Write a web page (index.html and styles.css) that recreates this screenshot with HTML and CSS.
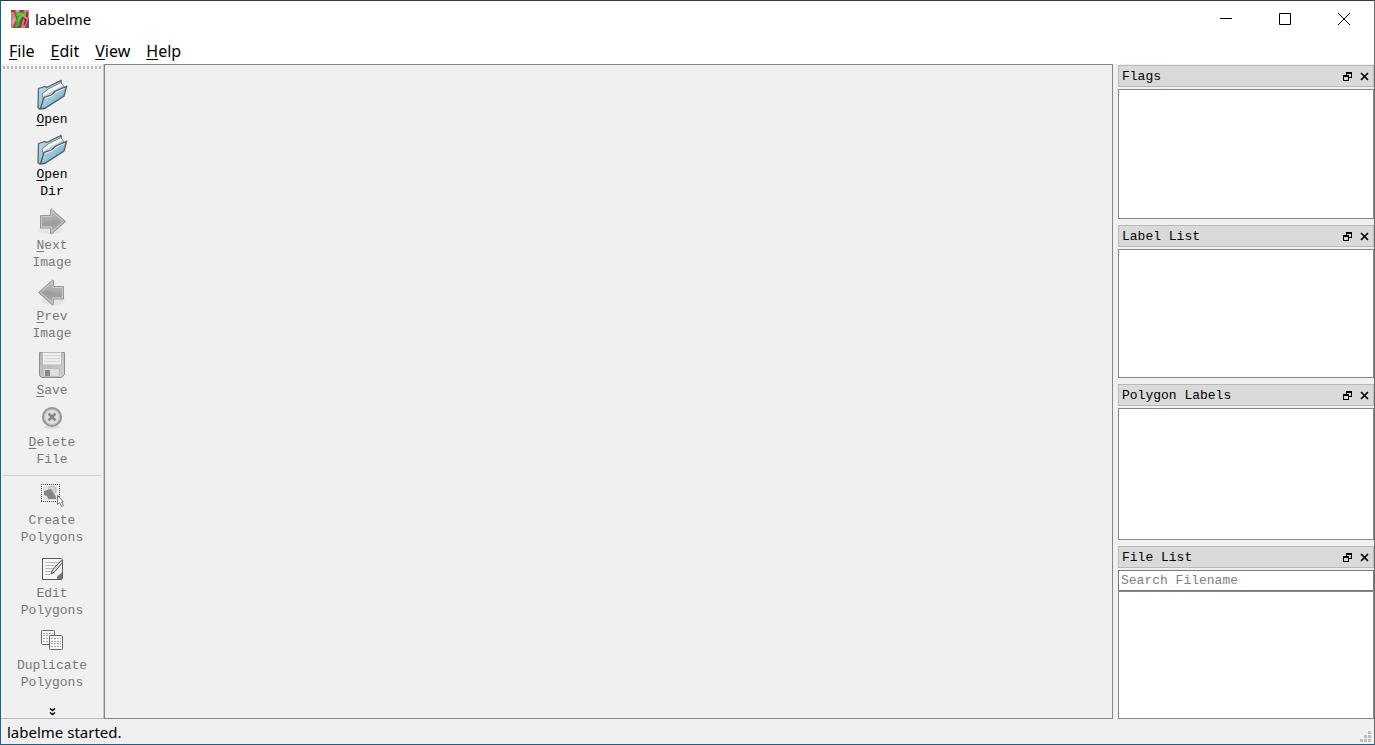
FILE: index.html
```html
<!DOCTYPE html>
<html lang="en">
<head>
    <meta charset="UTF-8">
    <meta name="viewport" content="width=device-width, initial-scale=1.0">
    <title>labelme</title>
    <link rel="stylesheet" href="styles.css">
</head>
<body>
    <!-- Shared shapes and gradients -->
    <svg class="defs" width="0" height="0" aria-hidden="true">
        <defs>
            <linearGradient id="folderBlue" x1="0" y1="0" x2="1" y2="1">
                <stop offset="0" stop-color="#c9e2ee"/>
                <stop offset=".5" stop-color="#9ac5dc"/>
                <stop offset="1" stop-color="#5f97b8"/>
            </linearGradient>
            <linearGradient id="arrowGray" x1="0" y1="0" x2="0" y2="1">
                <stop offset="0" stop-color="#c2c2c2"/>
                <stop offset=".55" stop-color="#a2a2a2"/>
                <stop offset="1" stop-color="#bcbcbc"/>
            </linearGradient>
            <linearGradient id="diskGray" x1="0" y1="0" x2="1" y2="1">
                <stop offset="0" stop-color="#b2b2b2"/>
                <stop offset="1" stop-color="#d2d2d2"/>
            </linearGradient>
            <symbol id="folder" viewBox="0 0 32 32">
                <path d="M2.5 9.5 9 7.5l1.500 1L25 1.500l1 8L8 29.500l-4.500.500-1.500-1.500z" fill="url(#folderBlue)" stroke="#5a676e" stroke-width="1.300"/>
                <path d="M6 15 12 10 25 3.500 28 8 25 13 8 25z" fill="#f4f4f4" stroke="#7c8386"/>
                <path d="M7 19 13 15 27 7.500" fill="none" stroke="#bfc5c8" stroke-width="2"/>
                <path d="M4.500 29.500 8 18.500 15.500 16 19 12.500 30.500 7.500 28 17 8.500 29.500z" fill="url(#folderBlue)" stroke="#4f5d64" stroke-width="1.300"/>
                <path d="M9 19.500 16 17l4-3.500 8.500-4" fill="none" stroke="#dff1fa"/>
            </symbol>
            <symbol id="arrow" viewBox="0 0 32 31">
                <ellipse cx="15" cy="24" rx="12" ry="4" fill="#e4e4e4"/>
                <path d="M4.500 9.500h10v-6l1-.500L29.500 15.500 15.500 28l-1-.500v-5.500h-10z" fill="url(#arrowGray)" stroke="#979797"/>
                <path d="M5.500 10.500h10V5l12 10.500L15.500 26v-5h-10z" fill="none" stroke="#cacaca"/>
                <path d="M6 17q8 1 10-2t9 0L16 24v-4H6z" fill="#8f8f8f" opacity=".3"/>
            </symbol>
            <symbol id="restore" viewBox="0 0 9 9">
                <path d="M3 0h6v6H6V5h2V2H4v1H3z"/>
                <path fill-rule="evenodd" d="M0 3h6v6H0zM1 5h4v3H1z"/>
            </symbol>
            <symbol id="cross" viewBox="0 0 9 9">
                <path d="m1 1 7 7M8 1 1 8" fill="none" stroke="#000" stroke-width="1.700"/>
            </symbol>
        </defs>
    </svg>

    <div class="window">
        <header class="titlebar">
            <svg class="app-icon" viewBox="0 0 18 18" aria-hidden="true">
                <rect width="18" height="18" fill="#8d4148"/>
                <path d="M0 2h3l2 6-3 10H0zM13 0h5v7l-4 11h-4l2-9z" fill="#c9827d"/>
                <path d="M5 0h4L7 3 4 2zM1 10l3-3 1 3-3 5z" fill="#e0a59a"/>
                <path d="m12 8 3 2-2 5M16 2v5" fill="none" stroke="#6e2932" stroke-width="1.500"/>
                <path d="M4 4 8 2h5l2 3-4 2-2 4-1 5-4 2 1-7 1-4z" fill="#4aa82d"/>
                <path d="m6 5 3-1 4 1-4 2-2 4" fill="none" stroke="#69d447" stroke-width="1.500"/>
            </svg>
            <h1>labelme</h1>
            <div class="window-controls">
                <button type="button" aria-label="Minimize">
                    <svg width="12" height="12"><path d="M0 5.500h12" stroke="#000"/></svg>
                </button>
                <button type="button" aria-label="Maximize">
                    <svg width="12" height="12"><path d="M.500.500h11v11H.500z" fill="none" stroke="#000"/></svg>
                </button>
                <button type="button" aria-label="Close">
                    <svg width="12" height="12"><path d="m0 0 12 12M12 0 0 12" stroke="#000"/></svg>
                </button>
            </div>
        </header>

        <nav class="menubar">
            <button type="button"><u>F</u>ile</button>
            <button type="button"><u>E</u>dit</button>
            <button type="button"><u>V</u>iew</button>
            <button type="button"><u>H</u>elp</button>
        </nav>

        <main class="workspace">
            <!-- Tools -->
            <aside class="toolbar">
                <div class="handle"></div>
                <button type="button" class="tool">
                    <svg class="icon"><use href="#folder"/></svg>
                    <span><u>O</u>pen</span>
                </button>
                <button type="button" class="tool">
                    <svg class="icon"><use href="#folder"/></svg>
                    <span><u>O</u>pen<br>Dir</span>
                </button>
                <button type="button" class="tool" disabled>
                    <svg class="icon icon-arrow"><use href="#arrow"/></svg>
                    <span><u>N</u>ext<br>Image</span>
                </button>
                <button type="button" class="tool" disabled>
                    <svg class="icon icon-arrow icon-flip"><use href="#arrow"/></svg>
                    <span><u>P</u>rev<br>Image</span>
                </button>
                <button type="button" class="tool" disabled>
                    <svg class="icon icon-save" viewBox="0 0 32 34">
                        <path d="M3.500 4.500h25v22l-3 3h-20l-2-2z" fill="url(#diskGray)" stroke="#8e8e8e"/>
                        <path d="M6.500 4.500h19V17h-19z" fill="#eee" stroke="#bbb"/>
                        <path d="M8 7.500h16M8 10.500h16M8 13.500h16" stroke="#d6d6d6"/>
                        <path d="M7.500 20.500h16v8h-16z" fill="#dedede" stroke="#bcbcbc"/>
                        <path d="M9 22h5v6H9z" fill="#898989"/>
                    </svg>
                    <span><u>S</u>ave</span>
                </button>
                <button type="button" class="tool" disabled>
                    <svg class="icon icon-delete" viewBox="0 0 32 29">
                        <ellipse cx="16" cy="22" rx="8" ry="2" fill="#dcdcdc"/>
                        <circle cx="16" cy="12" r="9" fill="#e0e0e0" stroke="#929292" stroke-width="2"/>
                        <circle cx="16" cy="12" r="7.500" fill="none" stroke="#bababa"/>
                        <path d="m12.500 8.500 7 7m0-7-7 7" stroke="#868686" stroke-width="2.500"/>
                    </svg>
                    <span><u>D</u>elete<br>File</span>
                </button>
                <hr>
                <button type="button" class="tool" disabled>
                    <svg class="icon" viewBox="0 0 32 32">
                        <path d="M5.500 4.500h18v17h-18z" fill="#f4f4f4"/>
                        <path d="M5 4.500h19M5 21.500h19M5.500 4v18M23.500 4v18" stroke="#4c4c4c" stroke-dasharray="1 1"/>
                        <path d="M7 6h15v14H7z" fill="#e2e2e2"/>
                        <circle cx="16" cy="10" r="4" fill="#d2d2d2" stroke="#b7b7b7"/>
                        <path d="m8 11 7-2 2 3 3 5v2h-8l-1-3-3-1z" fill="#868686"/>
                        <path d="M21.500 15.500v9l2-2 2 4 2-1-2-3.500h2z" fill="#fff" stroke="#777"/>
                    </svg>
                    <span>Create<br>Polygons</span>
                </button>
                <button type="button" class="tool" disabled>
                    <svg class="icon icon-edit" viewBox="0 0 32 33">
                        <path d="M6.500 6.500h19l1 1v19l-1 1h-19z" fill="#f5f5f5" stroke="#575757"/>
                        <path d="M9 10.500h14M9 13.500h12M9 16.500h9M9 19.500h7M9 22.500h5" stroke="#bcbcbc"/>
                        <path d="m15 22 1.500-4L25 8.500l2 1.500-8 9.500z" fill="#d8d8d8" stroke="#575757"/>
                        <path d="m14.500 22.500 1-2 1 1zM21 24.500l5-4v6.500h-5z" fill="#777"/>
                    </svg>
                    <span>Edit<br>Polygons</span>
                </button>
                <button type="button" class="tool" disabled>
                    <svg class="icon" viewBox="0 0 32 32">
                        <rect x="5.500" y="5.500" width="13" height="14" rx="1" fill="#f7f7f7" stroke="#666"/>
                        <path d="M7 8.500h10M7 10.500h10M7 13.500h6M7 16.500h6" stroke="#aaa" stroke-dasharray="2 1"/>
                        <rect x="13.500" y="10.500" width="13" height="14" rx="1" fill="#f7f7f7" stroke="#666"/>
                        <path d="M15 13.500h10M15 16.500h10M15 18.500h10M15 21.500h10" stroke="#aaa" stroke-dasharray="2 1"/>
                    </svg>
                    <span>Duplicate<br>Polygons</span>
                </button>
                <button type="button" class="more" aria-label="More tools">
                    <svg width="7" height="8"><path d="m1 .500 2.500 2L6 .500m-5 4 2.500 2 2.500-2" fill="none" stroke="#000" stroke-width="1.500"/></svg>
                </button>
            </aside>

            <section class="canvas" aria-label="Canvas"></section>

            <!-- Dock panels -->
            <aside class="docks">
                <section class="dock">
                    <header>
                        <h2>Flags</h2>
                        <button type="button" aria-label="Float"><svg><use href="#restore"/></svg></button>
                        <button type="button" aria-label="Close"><svg><use href="#cross"/></svg></button>
                    </header>
                    <div class="list"></div>
                </section>
                <section class="dock dock-labels">
                    <header>
                        <h2>Label List</h2>
                        <button type="button" aria-label="Float"><svg><use href="#restore"/></svg></button>
                        <button type="button" aria-label="Close"><svg><use href="#cross"/></svg></button>
                    </header>
                    <div class="list"></div>
                </section>
                <section class="dock dock-polygons">
                    <header>
                        <h2>Polygon Labels</h2>
                        <button type="button" aria-label="Float"><svg><use href="#restore"/></svg></button>
                        <button type="button" aria-label="Close"><svg><use href="#cross"/></svg></button>
                    </header>
                    <div class="list"></div>
                </section>
                <section class="dock dock-files">
                    <header>
                        <h2>File List</h2>
                        <button type="button" aria-label="Float"><svg><use href="#restore"/></svg></button>
                        <button type="button" aria-label="Close"><svg><use href="#cross"/></svg></button>
                    </header>
                    <input type="text" class="search" placeholder="Search Filename" aria-label="Search Filename">
                    <div class="list"></div>
                </section>
            </aside>
        </main>

        <footer class="statusbar">
            <span>labelme started.</span>
            <svg width="11" height="11" aria-hidden="true">
                <path d="M8 0h3v3H8zM4 4h3v3H4zM8 4h3v3H8zM0 8h3v3H0zM4 8h3v3H4zM8 8h3v3H8z" fill="#bfbfbf"/>
            </svg>
        </footer>
    </div>
</body>
</html>
```
FILE: styles.css
```css
* {
    box-sizing: border-box;
}

body {
    margin: 0;
    font-family: "Noto Sans", "Open Sans", sans-serif;
    font-size: 15px;
    color: #000;
}

button {
    margin: 0;
    padding: 0;
    border: 0;
    background: none;
    font: inherit;
    color: inherit;
}

svg {
    display: block;
}

u {
    text-underline-offset: 2px;
}

.defs {
    position: absolute;
}

.window {
    display: flex;
    flex-direction: column;
    height: 100vh;
    border: 1px solid #1d6080;
    border-top-color: #2b3a49;
    border-right-color: #6b6b6b;
    background: #f0f0f0;
}

/* Title and menus */
.titlebar {
    display: flex;
    align-items: center;
    height: 36px;
    padding: 0 1px 0 10px;
    background: #fff;
}

.titlebar h1 {
    margin: 0;
    font-size: 15px;
    font-weight: normal;
}

.app-icon {
    width: 18px;
    height: 18px;
    margin-right: 6px;
}

.window-controls {
    display: flex;
    height: 100%;
    margin-left: auto;
}

.window-controls button {
    display: flex;
    align-items: center;
    justify-content: center;
    width: 59px;
}

.menubar {
    display: flex;
    gap: 16px;
    height: 27px;
    padding-left: 8px;
    background: #fff;
    font-size: 16px;
}

/* Main area */
.workspace {
    display: flex;
    flex: 1;
    min-height: 0;
}

.toolbar {
    display: flex;
    flex-direction: column;
    align-items: center;
    width: 103px;
    border-right: 1px solid #c4c6ca;
    border-bottom: 1px solid #b8b8b8;
    font-family: "Liberation Mono", monospace;
    font-size: 13px;
    line-height: 17px;
}

.handle {
    align-self: stretch;
    height: 3px;
    margin: 2px 2px 10px;
    background: repeating-linear-gradient(90deg, #b9b9b9 0 2px, #f8f8f8 2px 4px);
}

.tool {
    display: flex;
    flex-direction: column;
    align-items: center;
    margin-bottom: 6px;
}

.tool:disabled {
    color: #787878;
}

.icon {
    width: 32px;
    height: 32px;
}

.icon-arrow {
    height: 31px;
}

.icon-save {
    height: 34px;
}

.icon-delete {
    height: 29px;
}

.icon-edit {
    height: 33px;
}

.icon-flip {
    transform: scaleX(-1);
}

.toolbar hr {
    align-self: stretch;
    height: 1px;
    margin: 1px 2px 4px;
    border: 0;
    background: #cfcfcf;
}

.more {
    margin: auto 0 2px;
}

.canvas {
    flex: 1;
    border: 1px solid #828790;
}

.docks {
    display: flex;
    flex-direction: column;
    gap: 6px;
    width: 261px;
    padding: 1px 0 0 5px;
    font-family: "Liberation Mono", monospace;
    font-size: 13px;
}

.dock {
    display: flex;
    flex: 154 0 0;
    flex-direction: column;
    min-height: 0;
}

.dock-labels {
    flex-grow: 153;
}

.dock-polygons {
    flex-grow: 156;
}

.dock-files {
    flex-grow: 173;
}

.dock header {
    display: flex;
    align-items: center;
    gap: 8px;
    height: 22px;
    margin-bottom: 2px;
    padding: 0 4px 0 3px;
    border: 1px solid #b9b9b9;
    background: #dadada;
}

.dock h2 {
    flex: 1;
    margin: 0;
    font-size: 13px;
    font-weight: normal;
}

.dock header svg {
    width: 9px;
    height: 9px;
}

.list {
    flex: 1;
    border: 1px solid #828790;
    background: #fff;
}

.search {
    width: 100%;
    height: 21px;
    padding: 0 2px;
    border: 1px solid #7a7a7a;
    border-radius: 0;
    background: #fff;
    font: inherit;
}

.search::placeholder {
    color: #808080;
}

.statusbar {
    display: flex;
    align-items: center;
    justify-content: space-between;
    height: 25px;
    padding: 0 3px 0 6px;
}

.statusbar svg {
    align-self: flex-end;
    margin-bottom: 2px;
}
```
